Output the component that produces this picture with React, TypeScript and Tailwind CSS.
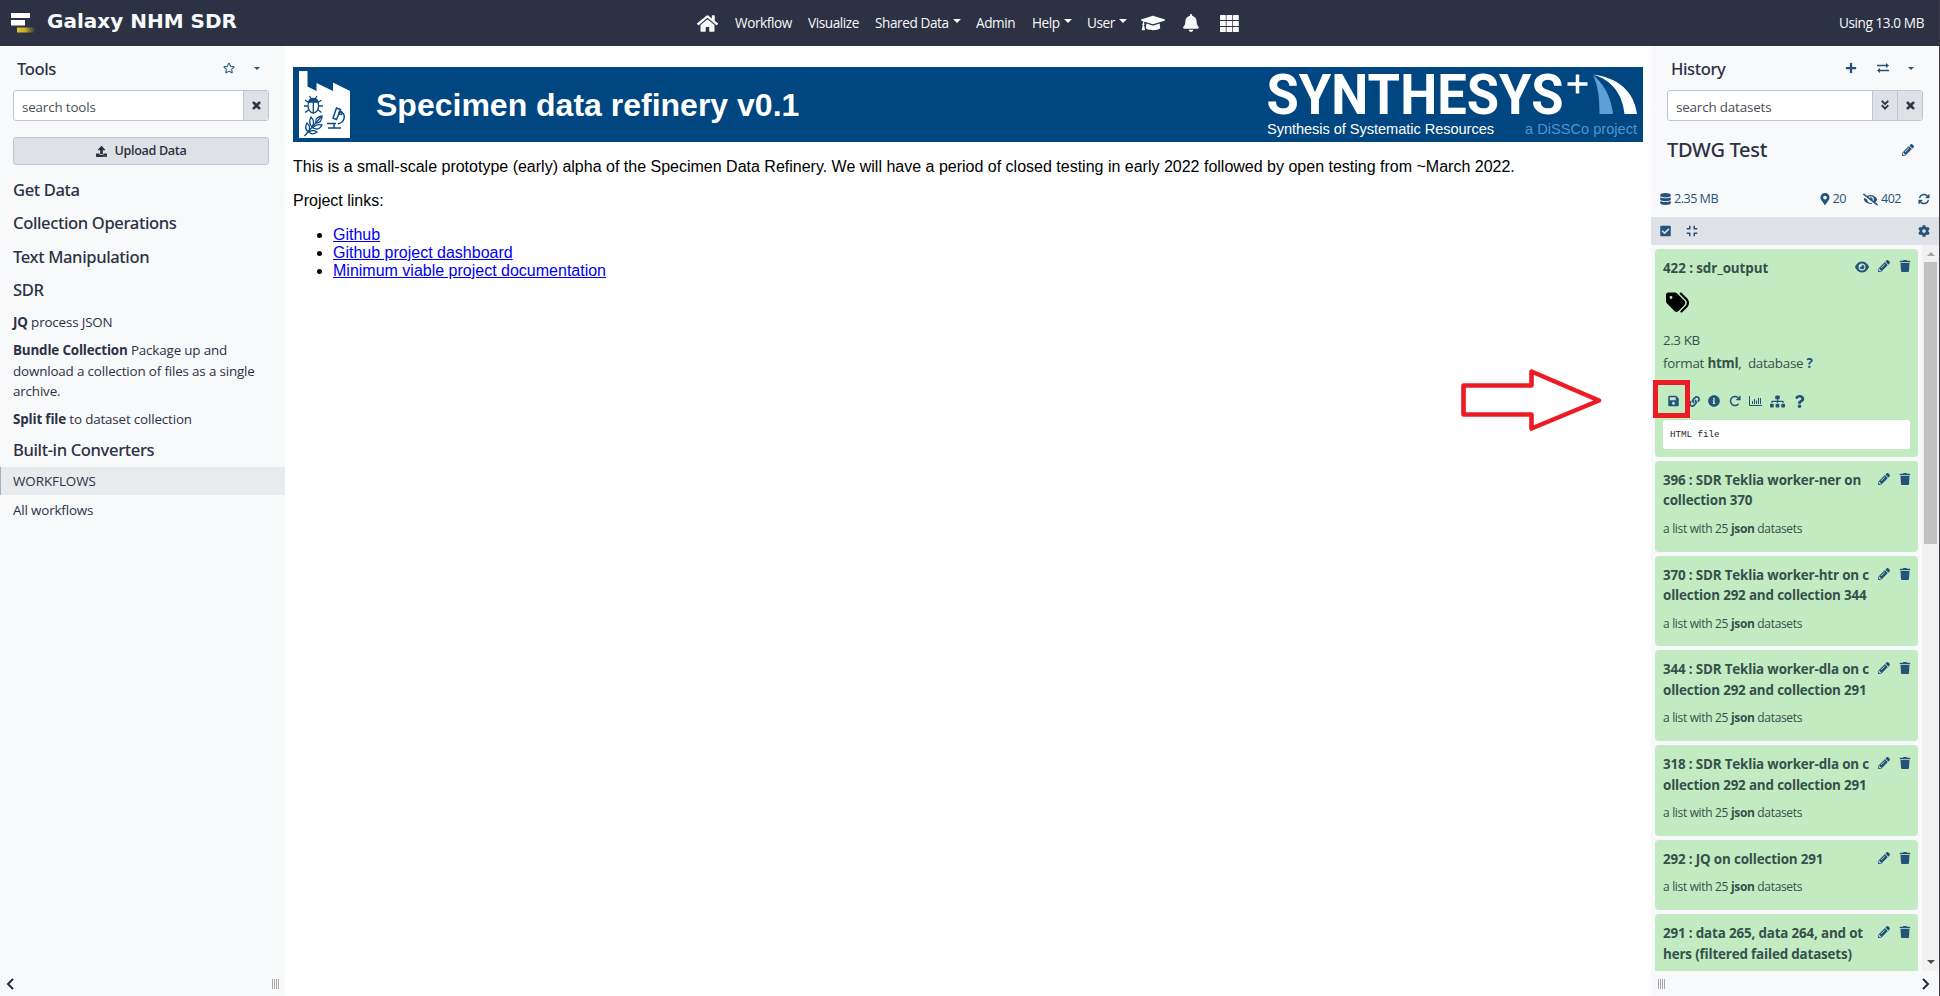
import React from "react";
import {
  FaHome, FaGraduationCap, FaBell, FaRegStar, FaTimes, FaUpload, FaAngleDoubleDown, FaPlus,
  FaDatabase, FaMapMarkerAlt, FaEyeSlash, FaCheckSquare, FaCompress, FaCog, FaTrash,
  FaSave, FaLink, FaInfoCircle, FaSitemap, FaQuestion, FaPencilAlt,
} from "react-icons/fa";
import { FaArrowsRotate, FaArrowRotateRight, FaTags, FaEye } from "react-icons/fa6";

const Caret = ({ className = "" }: { className?: string }) => (
  <svg className={className} width="8" height="4" viewBox="0 0 8 4">
    <path d="M0 0h8L4 4z" fill="currentColor" />
  </svg>
);

const GalaxyMark = () => (
  <svg width="26" height="22" viewBox="0 0 26 22" className="ml-[10px] mt-[12px] shrink-0">
    <defs>
      <linearGradient id="gold" x1="0" x2="1">
        <stop offset="0" stopColor="#d9c32a" />
        <stop offset="0.45" stopColor="#c4b12b" />
        <stop offset="1" stopColor="#2c3143" />
      </linearGradient>
    </defs>
    <rect x="1" y="1" width="19" height="5" fill="#fff" />
    <rect x="1" y="8" width="14" height="5.5" fill="#fff" />
    <rect x="7" y="15.5" width="18" height="5" fill="url(#gold)" />
  </svg>
);

const NavItem = ({ label, caret, className }: { label: string; caret?: boolean; className: string }) => (
  <div className={`flex items-center whitespace-nowrap ${className}`}>
    <span>{label}</span>
    {caret && <Caret className="ml-[4px] mt-[-3px]" />}
  </div>
);

const Header = () => (
  <header className="flex h-[46px] shrink-0 bg-[#2c3143] text-[#f8f9fa]">
    <div className="flex w-[697px]">
      <GalaxyMark />
      <span className="ml-[11px] mt-[7px] whitespace-nowrap font-['DejaVu_Sans'] text-[20px] font-bold leading-[28px] tracking-[0px]">
        Galaxy NHM SDR
      </span>
    </div>
    <nav className="flex h-[46px] flex-1 items-center text-[13.6px] tracking-[-0.42px]">
      <FaHome className="mr-[17px] size-[21px]" />
      <NavItem label="Workflow" className="w-[73px]" />
      <NavItem label="Visualize" className="w-[67px]" />
      <NavItem label="Shared Data" caret className="w-[101px]" />
      <NavItem label="Admin" className="w-[56px]" />
      <NavItem label="Help" caret className="w-[55px]" />
      <NavItem label="User" caret className="w-[54px]" />
      <FaGraduationCap className="mr-[17px] size-[24px]" />
      <FaBell className="mr-[20px] size-[18px]" />
      <svg width="19" height="17" viewBox="0 0 19 17" fill="currentColor">
        {[0, 6.5, 13].map((x) => [0, 6, 12].map((y) => <rect key={`${x}-${y}`} x={x} y={y} width="5.8" height="5" rx="0.6" />))}
      </svg>
      <span className="ml-auto mr-[15px]">Using 13.0 MB</span>
    </nav>
  </header>
);

const Grip = () => (
  <div className="flex h-[10px] gap-[1px]">
    {[0, 1, 2, 3].map((i) => <i key={i} className="w-px bg-[#a9a9a9]" />)}
  </div>
);

const Section = ({ label, className }: { label: string; className: string }) => (
  <h2 className={`flex items-center pl-[13px] font-['Noto_Sans'] text-[16.6px] font-medium tracking-[-0.38px] ${className}`}>{label}</h2>
);

const ToolsPanel = () => (
  <aside className="flex w-[285px] shrink-0 flex-col bg-[#f8f9fb]">
    <div className="flex h-[44px] items-center pl-[17px]">
      <span className="mt-[2px] font-['Noto_Sans'] text-[16.6px] font-medium tracking-[-0.4px]">Tools</span>
      <FaRegStar className="ml-auto mr-[19px] size-[12px] text-[#25537b]" />
      <Caret className="mr-[25px] h-[3px] w-[6px] text-[#25537b]" />
    </div>
    <div className="mx-[13px] flex h-[31px] w-[256px] overflow-hidden rounded-[3px] border border-[#bdc6d0] bg-white">
      <span className="flex-1 pl-[8px] pt-[2px] leading-[28px] text-[#495057]">search tools</span>
      <span className="flex w-[25px] items-center justify-center border-l border-[#bdc6d0] bg-[#dee2e6]">
        <FaTimes className="mb-[1px] size-[11px]" strokeWidth="40" stroke="currentColor" />
      </span>
    </div>
    <div className="mx-[13px] mt-[16px] flex h-[28px] w-[256px] items-center justify-center rounded-[3px] border border-[#bdc6d0] bg-[#dee2e6] text-[12.6px] font-semibold tracking-[-0.35px]">
      <FaUpload className="mr-[8px] size-[11px]" />
      Upload Data
    </div>
    <Section label="Get Data" className="mt-[8px] h-[34px]" />
    <Section label="Collection Operations" className="h-[33px]" />
    <Section label="Text Manipulation" className="h-[34px]" />
    <Section label="SDR" className="h-[33px]" />
    <p className="mt-[5px] pl-[13px] leading-[20.4px]"><b>JQ</b> process JSON</p>
    <p className="mt-[8px] whitespace-nowrap pl-[13px] leading-[20.4px]">
      <b>Bundle Collection</b> Package up and
      <br />download a collection of files as a single
      <br />archive.
    </p>
    <p className="mt-[7px] pl-[13px] leading-[20.4px]"><b>Split file</b> to dataset collection</p>
    <Section label="Built-in Converters" className="mt-[4px] h-[34px]" />
    <div className="flex h-[28px] items-center border-l border-[#a4b0bd] bg-[#e8ebee] pl-[12px] tracking-[-0.05px]">WORKFLOWS</div>
    <div className="flex h-[30px] items-center pl-[13px]">All workflows</div>
    <div className="mt-auto flex h-[25px] items-center pl-[6px] pr-[6px]">
      <svg width="8" height="12" viewBox="0 0 8 12" fill="none" stroke="#212b45" strokeWidth="2"><path d="M7 1L2 6l5 5" /></svg>
      <div className="ml-auto"><Grip /></div>
    </div>
  </aside>
);

const FactoryLogo = () => (
  <svg width="52" height="68" viewBox="0 0 52 68" className="ml-[6px] mt-[4px] shrink-0" fill="none" stroke="#0b4a83">
    <path d="M0 0h8.500v15.500L17.500 20v-8L34 20v-8.500L51 20v47H0z" fill="#fff" stroke="none" />
    <g strokeWidth="1.3">
      <ellipse cx="14.300" cy="35" rx="5.300" ry="7" />
      <path d="M14.300 30v12M5 35h4M20 35h4M6 29l3.500 2.500M22.500 29 19 31.500M6 41.500l3.500-2.500M22.500 41.500 19 39" />
      <path d="M9.500 31a5 5 0 0 1 9.600 0z" fill="#0b4a83" />
      <path d="M10.500 25l2 3M18 25l-2 3" />
    </g>
    <g strokeWidth="1.3">
      <path d="M5.500 65 22 46" />
      <path d="M17 52c-1-4 1-6 6-7-.2 5-2 7-6 7zM13 56c-3-3-3-6-1-10 3 3 3.500 6 1 10zM9 61c-3-3-3-6-1-9 3 3 3.500 6 1 9zM14 57c2-3 5-4 9-3-2 4-5 5-9 3zM10 61c3-2 5-2 8 0-3 2.500-6 2.500-8 0z" />
    </g>
    <g strokeWidth="1.5">
      <path d="m34 47 3.500-10 4 1.500-4 10zM28 52.500h9M29 57h13M35 53v4" />
      <path d="M41 41c6 0 6 10-2 12" />
      <circle cx="41.500" cy="42" r="1.500" />
    </g>
  </svg>
);

const SynthesysLogo = () => (
  <svg width="377" height="75" viewBox="0 0 377 75" fill="#fff" fontFamily="'Liberation Sans', Arial, sans-serif">
    <text x="0.500" y="46.500" fontFamily="Roboto, sans-serif" fontSize="55" fontWeight="700" textLength="297" lengthAdjust="spacingAndGlyphs">SYNTHESYS</text>
    <path d="M311.500 7.500v19M301.500 17h20" stroke="#fff" strokeWidth="3.500" />
    <path d="M327 8c9 7 18 20 20 39h-13.500C333.500 30 332 19 327 8z" fill="#5f9ed6" />
    <path d="M327 7.500c24 3 41 16 44 39.500h-12.500C356.500 27 346 13 327 7.500z" />
    <text x="1" y="67" fontSize="14.600" textLength="227">Synthesis of Systematic Resources</text>
    <text x="259" y="67" fontSize="14.600" fill="#5092cf" textLength="112">a DiSSCo project</text>
  </svg>
);

const Center = () => (
  <main className="min-w-0 flex-1 bg-white pl-[8px] pr-[8px] pt-[21px] font-['Liberation_Sans'] text-[16px] leading-[18px] tracking-normal text-black">
    <div className="flex h-[75px] bg-[#004680]">
      <FactoryLogo />
      <h1 className="ml-[25px] mt-[20px] flex-1 whitespace-nowrap text-[32px] font-bold leading-[37px] text-white">Specimen data refinery v0.1</h1>
      <SynthesysLogo />
    </div>
    <p className="mt-[16px]">
      This is a small-scale prototype (early) alpha of the Specimen Data Refinery. We will have a period of closed testing in early 2022 followed by open testing from ~March 2022.
    </p>
    <p className="mt-[16px]">Project links:</p>
    <ul className="mt-[16px] list-disc pl-[40px] marker:text-black">
      {["Github", "Github project dashboard", "Minimum viable project documentation"].map((t) => (
        <li key={t}><a className="text-[#0000ee] underline">{t}</a></li>
      ))}
    </ul>
  </main>
);

const Item = ({ lines }: { lines: string[] }) => (
  <div className="mb-[4px] shrink-0 rounded-[4px] bg-[#c2ebc2] pb-[12.500px] pl-[8px] pt-[9px]">
    <div className="flex">
      <div className="w-[215px] whitespace-nowrap font-bold leading-[20.4px] tracking-[-0.16px]">
        {lines.map((l) => <div key={l}>{l}</div>)}
      </div>
      <FaPencilAlt className="mt-[3px] size-[12px] text-[#25537b]" />
      <FaTrash className="ml-[9px] mt-[3px] size-[12px] text-[#25537b]" />
    </div>
    <div className="mt-[8px] text-[12px] leading-[20.4px] tracking-[-0.33px]">a list with 25 <b>json</b> datasets</div>
  </div>
);

const items = [
  ["396 : SDR Teklia worker-ner on", "collection 370"],
  ["370 : SDR Teklia worker-htr on c", "ollection 292 and collection 344"],
  ["344 : SDR Teklia worker-dla on c", "ollection 292 and collection 291"],
  ["318 : SDR Teklia worker-dla on c", "ollection 292 and collection 291"],
  ["292 : JQ on collection 291"],
  ["291 : data 265, data 264, and ot", "hers (filtered failed datasets)"],
];

const OutputCard = () => (
  <div className="mb-[4px] h-[208px] shrink-0 rounded-[4px] bg-[#c2ebc2] pl-[8px] pt-[9px]">
    <div className="flex text-[#25537b]">
      <span className="w-[192px] font-bold leading-[20.4px] tracking-[-0.08px] text-[#36504b]">422 : sdr_output</span>
      <FaEye className="mt-[2px] size-[14px]" />
      <FaPencilAlt className="ml-[9px] mt-[2px] size-[12px]" />
      <FaTrash className="ml-[9px] mt-[2px] size-[12px]" />
    </div>
    <FaTags className="ml-[3px] mt-[13px] size-[23px] text-black" />
    <div className="mt-[16px] leading-[20.4px] tracking-[-0.4px]">2.3 KB</div>
    <div className="mt-[2px] leading-[20.4px] tracking-[-0.25px]">
      format <b>html</b>,&nbsp; database <b className="text-[#25537b]">?</b>
    </div>
    <div className="mt-[20px] flex h-[16px] items-center text-[#25537b]">
      <FaSave className="ml-[5px] h-[12px] w-[11px]" />
      <FaLink className="ml-[10px] size-[11px]" />
      <FaInfoCircle className="ml-[8px] size-[12px]" />
      <FaArrowRotateRight className="ml-[9px] size-[12px]" />
      <svg className="ml-[8px]" width="13" height="11" viewBox="0 0 13 11" fill="none" stroke="currentColor">
        <path d="M.5 0v9.500H13M3.500 8V5M5.500 8V3M7.500 8V4.500M9.500 8V2M11.500 8V2" />
      </svg>
      <FaSitemap className="ml-[8px] size-[15px]" />
      <FaQuestion className="ml-[8px] size-[13px]" />
    </div>
    <div className="mt-[11px] h-[29px] w-[247px] rounded-[3px] bg-white pl-[7px] font-['Liberation_Mono'] text-[9.200px] leading-[29px] tracking-normal text-[#212529]">HTML file</div>
  </div>
);

const HistoryPanel = () => (
  <aside className="flex w-[288px] shrink-0 flex-col bg-[#f8f9fb]">
    <div className="flex h-[44px] shrink-0 items-center pl-[20px] text-[#25537b]">
      <span className="mt-[2px] font-['Noto_Sans'] text-[16.6px] font-medium tracking-[-0.4px] text-[#2c3143]">History</span>
      <FaPlus className="ml-auto mr-[20px] size-[12px]" />
      <svg width="12" height="10" viewBox="0 0 12 10" className="mr-[19px]" fill="none" stroke="currentColor" strokeWidth="1.4">
        <path d="M0 2.500h10M12 7.500H2" />
        <path d="M9 0l3 2.500L9 5zM3 5 0 7.500 3 10z" fill="currentColor" stroke="none" />
      </svg>
      <Caret className="mr-[25px] h-[3px] w-[6px]" />
    </div>
    <div className="ml-[16px] flex h-[31px] w-[256px] shrink-0 overflow-hidden rounded-[3px] border border-[#bdc6d0] bg-white">
      <span className="flex-1 pl-[8px] pt-[2px] leading-[28px] text-[#495057]">search datasets</span>
      <span className="flex w-[25px] items-center justify-center border-l border-[#bdc6d0] bg-[#dee2e6]">
        <FaAngleDoubleDown className="mb-[1px] size-[12px]" />
      </span>
      <span className="flex w-[25px] items-center justify-center border-l border-[#bdc6d0] bg-[#dee2e6]">
        <FaTimes className="mb-[1px] size-[11px]" strokeWidth="40" stroke="currentColor" />
      </span>
    </div>
    <div className="flex h-[58px] shrink-0 items-center pl-[16px]">
      <span className="font-['Noto_Sans'] text-[20px] font-medium tracking-[-0.3px]">TDWG Test</span>
      <FaPencilAlt className="ml-auto mr-[25px] size-[12px] text-[#25537b]" />
    </div>
    <div className="flex h-[38px] shrink-0 items-center pl-[9px] pr-[9px] pt-[2px] text-[12.600px] tracking-[-0.52px] text-[#25537b]">
      <FaDatabase className="mr-[3px] h-[12px] w-[11px]" />
      2.35 MB
      <FaMapMarkerAlt className="ml-auto mr-[2px] size-[12px]" />20
      <FaEyeSlash className="ml-[17px] mr-[3px] size-[15px]" />402
      <FaArrowsRotate className="ml-[17px] size-[12px]" />
    </div>
    <div className="flex h-[28px] shrink-0 items-center bg-[#dee2e6] pl-[9px] pr-[9px] text-[#25537b]">
      <FaCheckSquare className="h-[12px] w-[11px]" />
      <FaCompress className="ml-[15px] size-[12px]" />
      <FaCog className="ml-auto size-[12px]" />
    </div>
    <div className="flex min-h-0 flex-1 text-[#36504b]">
      <div className="flex w-[271px] flex-col overflow-hidden pl-[4px] pr-[4px] pt-[4px]">
        <OutputCard />
        {items.map((l) => <Item key={l[0]} lines={l} />)}
      </div>
      <div className="flex w-[17px] flex-col items-center justify-between bg-[#f1f1f1] pt-[7px] pb-[7px]">
        <svg width="8" height="4" viewBox="0 0 8 4"><path d="M0 4h8L4 0z" fill="#a3a3a3" /></svg>
        <div className="mb-auto mt-[6px] h-[282px] w-[13px] bg-[#c1c1c1]" />
        <Caret className="text-[#505050]" />
      </div>
    </div>
    <div className="flex h-[25px] shrink-0 items-center pl-[7px] pr-[9px]">
      <Grip />
      <svg className="ml-auto" width="8" height="12" viewBox="0 0 8 12" fill="none" stroke="#212b45" strokeWidth="2"><path d="M1 1l5 5-5 5" /></svg>
    </div>
  </aside>
);

export default function App() {
  return (
    <div className="relative flex h-[996px] w-[1940px] flex-col overflow-hidden border-r border-[#3a3a40] bg-white font-['Open_Sans','Noto_Sans',sans-serif] text-[13.4px] tracking-[-0.16px] text-[#2c3143]">
      <Header />
      <div className="flex min-h-0 flex-1">
        <ToolsPanel />
        <Center />
        <HistoryPanel />
      </div>
      <svg className="absolute left-[1460px] top-[366px]" width="146" height="68" viewBox="0 0 146 68" fill="none" stroke="#ed1c24" strokeWidth="4.600">
        <path d="M3.500 19.500h68V5.500L139 34.500 71.500 62.500v-14H3.500z" strokeLinejoin="round" />
      </svg>
      <div className="absolute left-[1653px] top-[380px] h-[38px] w-[37px] border-[5px] border-[#ed1c24]" />
    </div>
  );
}
